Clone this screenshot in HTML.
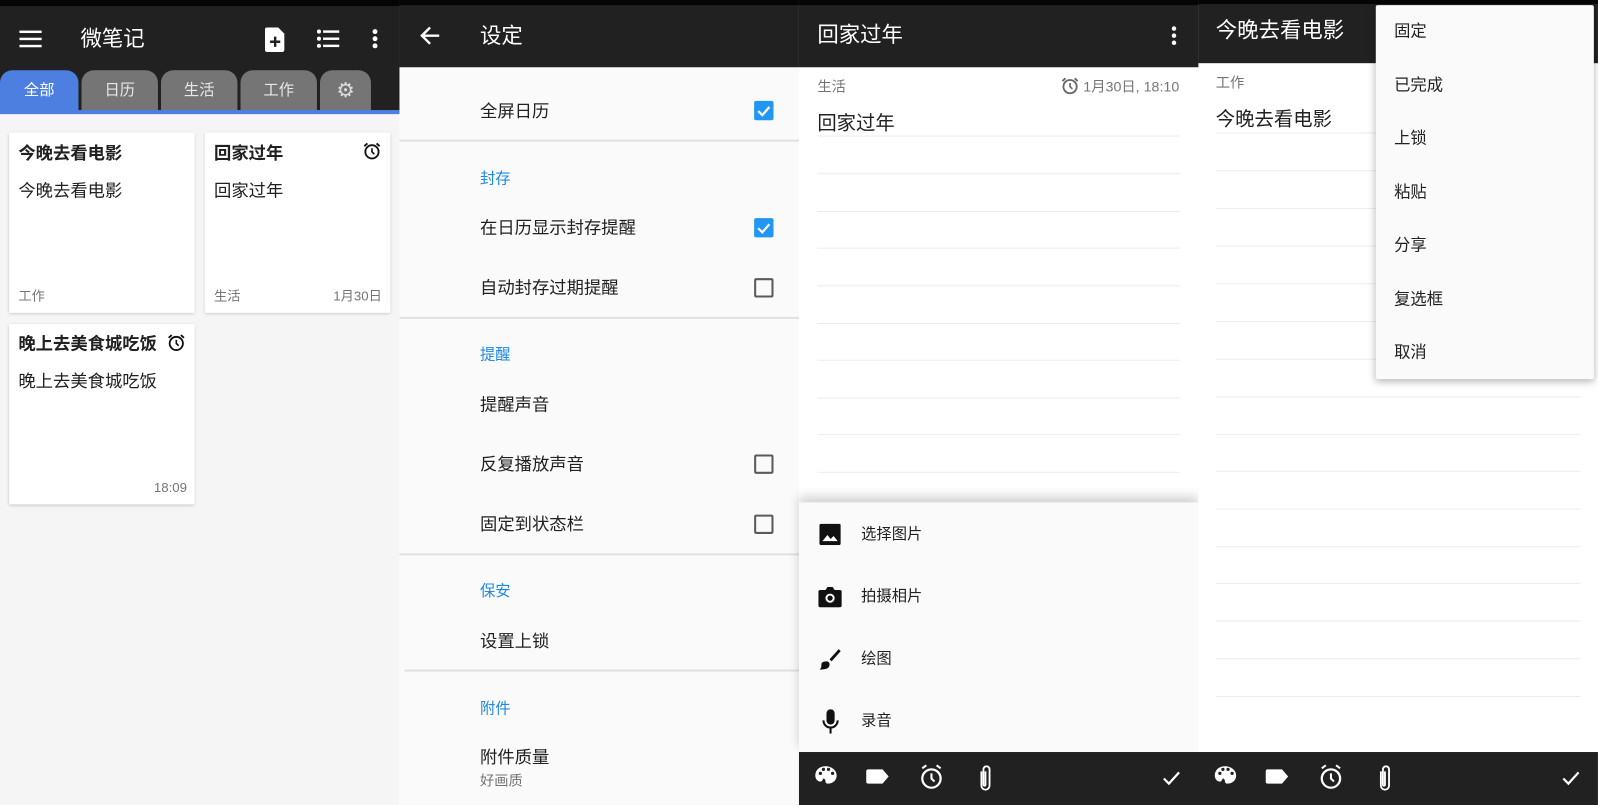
<!DOCTYPE html>
<html><head><meta charset="utf-8"><style>
*{margin:0;padding:0;box-sizing:border-box}
html,body{width:1598px;height:805px;overflow:hidden;background:#fafafa}
body{font-family:"Liberation Sans","Noto Sans CJK SC",sans-serif;color:#212121}
#w{position:absolute;left:0;top:0;width:1568px;height:790px;transform-origin:0 0;transform:scale(1.0191,1.0190)}
.a{position:absolute}
.t{position:absolute;white-space:nowrap;line-height:1}
.tb{background:#212121}
.tab{position:absolute;top:69px;height:40px;border-radius:12px 12px 0 0;background:#757575;color:#e8e8e8;font-size:15px;text-align:center;line-height:40px}
.card{position:absolute;background:#fff;box-shadow:0 1px 3px rgba(0,0,0,.2)}
.line{position:absolute;height:1px;background:#ececec}
.cb{position:absolute;width:19px;height:19px;border-radius:2px}
.cb.on{background:#2196f3}
.cb.off{border:2px solid #5a5a5a}
.blue{color:#1e88e5;font-size:15px}
.div{position:absolute;height:2px;background:#e0e0e0}
.mi{position:absolute;left:18px;font-size:16px;line-height:1}
</style></head><body><div id="w">
<svg width="0" height="0" style="position:absolute"><defs>
<g id="alarm"><circle cx="9" cy="10" r="6.5" fill="none" stroke="currentColor" stroke-width="1.8"/><path d="M9 6.5V10l2.3 2.3" stroke="currentColor" stroke-width="1.6" fill="none"/><path d="M1.5 4.5l3-2.7M16.5 4.5l-3-2.7" stroke="currentColor" stroke-width="1.8"/></g>
</defs></svg>

<!-- Panel 1 -->
<div class="a" style="left:0;top:0;width:392px;height:790px;background:#f5f5f5"></div>
<div class="a tb" style="left:0;top:0;width:392px;height:110px"></div>
<div class="a" style="left:0;top:0;width:392px;height:6px;background:#050505"></div>
<svg class="a" style="left:19px;top:29px" width="22" height="18"><rect y="1" width="22" height="2.4" fill="#fff"/><rect y="8" width="22" height="2.4" fill="#fff"/><rect y="15" width="22" height="2.4" fill="#fff"/></svg>
<div class="t" style="left:79px;top:28px;font-size:21px;color:#fff">微笔记</div>
<svg class="a" style="left:260px;top:27px" width="20" height="24" viewBox="0 0 20 24"><path d="M2 0h11l6 6v16a2 2 0 0 1-2 2H2a2 2 0 0 1-2-2V2a2 2 0 0 1 2-2z" fill="#fff"/><path d="M10 9v10M5 14h10" stroke="#212121" stroke-width="2.4"/></svg>
<svg class="a" style="left:311px;top:29px" width="22" height="18"><g fill="#fff"><circle cx="2" cy="2" r="2"/><circle cx="2" cy="9" r="2"/><circle cx="2" cy="16" r="2"/><rect x="6" y="0.8" width="16" height="2.4"/><rect x="6" y="7.8" width="16" height="2.4"/><rect x="6" y="14.8" width="16" height="2.4"/></g></svg>
<svg class="a" style="left:365px;top:28px" width="6" height="20"><g fill="#fff"><circle cx="3" cy="3" r="2.4"/><circle cx="3" cy="10" r="2.4"/><circle cx="3" cy="17" r="2.4"/></g></svg>
<div class="tab" style="left:0;width:77px;background:#4d7fe0;color:#fff">全部</div>
<div class="tab" style="left:80px;width:75px">日历</div>
<div class="tab" style="left:158px;width:75px">生活</div>
<div class="tab" style="left:236px;width:75px">工作</div>
<div class="tab" style="left:314px;width:50px;font-size:20px;color:#ddd">⚙</div>
<div class="a" style="left:0;top:108px;width:392px;height:4px;background:#4d7fe0"></div>

<div class="card" style="left:9px;top:130px;width:182px;height:177px"></div>
<div class="t" style="left:18px;top:142px;font-size:17px;font-weight:bold">今晚去看电影</div>
<div class="t" style="left:18px;top:179px;font-size:17px">今晚去看电影</div>
<div class="t" style="left:18px;top:284px;font-size:13px;color:#757575">工作</div>
<div class="card" style="left:201px;top:130px;width:182px;height:177px"></div>
<div class="t" style="left:210px;top:142px;font-size:17px;font-weight:bold">回家过年</div>
<svg class="a" style="left:356px;top:139px;color:#111" width="18" height="18"><use href="#alarm"/></svg>
<div class="t" style="left:210px;top:179px;font-size:17px">回家过年</div>
<div class="t" style="left:210px;top:284px;font-size:13px;color:#757575">生活</div>
<div class="t" style="left:327px;top:284px;font-size:13px;color:#757575">1月30日</div>
<div class="card" style="left:9px;top:318px;width:182px;height:177px"></div>
<div class="t" style="left:18px;top:329px;font-size:17px;font-weight:bold">晚上去美食城吃饭</div>
<svg class="a" style="left:164px;top:327px;color:#111" width="18" height="18"><use href="#alarm"/></svg>
<div class="t" style="left:18px;top:366px;font-size:17px">晚上去美食城吃饭</div>
<div class="t" style="left:151px;top:472px;font-size:13px;color:#757575">18:09</div>

<!-- Panel 2 -->
<div class="a" style="left:392px;top:0;width:392px;height:790px;background:#fafafa"></div>
<div class="a tb" style="left:392px;top:0;width:392px;height:66px"></div>
<div class="a" style="left:392px;top:0;width:392px;height:5px;background:#050505"></div>
<svg class="a" style="left:412px;top:25px" width="20" height="20" viewBox="0 0 20 20"><path d="M19 10H3M10 2L2 10l8 8" stroke="#fff" stroke-width="2.4" fill="none"/></svg>
<div class="t" style="left:471px;top:25px;font-size:21px;color:#fff">设定</div>
<div class="t" style="left:471px;top:101px;font-size:17px">全屏日历</div>
<div class="cb on" style="left:740px;top:99px"><svg width="19" height="19"><path d="M4 10l4 4 7-8" stroke="#fff" stroke-width="2.2" fill="none"/></svg></div>
<div class="div" style="left:392px;top:137px;width:392px"></div>
<div class="t blue" style="left:471px;top:168px">封存</div>
<div class="t" style="left:471px;top:215px;font-size:17px">在日历显示封存提醒</div>
<div class="cb on" style="left:740px;top:214px"><svg width="19" height="19"><path d="M4 10l4 4 7-8" stroke="#fff" stroke-width="2.2" fill="none"/></svg></div>
<div class="t" style="left:471px;top:274px;font-size:17px">自动封存过期提醒</div>
<div class="cb off" style="left:740px;top:273px"></div>
<div class="div" style="left:392px;top:311px;width:392px"></div>
<div class="t blue" style="left:471px;top:341px">提醒</div>
<div class="t" style="left:471px;top:389px;font-size:17px">提醒声音</div>
<div class="t" style="left:471px;top:447px;font-size:17px">反复播放声音</div>
<div class="cb off" style="left:740px;top:446px"></div>
<div class="t" style="left:471px;top:506px;font-size:17px">固定到状态栏</div>
<div class="cb off" style="left:740px;top:505px"></div>
<div class="div" style="left:392px;top:543px;width:392px"></div>
<div class="t blue" style="left:471px;top:573px">保安</div>
<div class="t" style="left:471px;top:621px;font-size:17px">设置上锁</div>
<div class="div" style="left:397px;top:657px;width:387px"></div>
<div class="t blue" style="left:471px;top:688px">附件</div>
<div class="t" style="left:471px;top:735px;font-size:17px">附件质量</div>
<div class="t" style="left:471px;top:759px;font-size:14px;color:#757575">好画质</div>

<!-- Panel 3 -->
<div class="a" style="left:784px;top:0;width:392px;height:790px;background:#fff"></div>
<div class="a tb" style="left:784px;top:0;width:392px;height:66px"></div>
<div class="a" style="left:784px;top:0;width:392px;height:5px;background:#050505"></div>
<div class="t" style="left:802px;top:24px;font-size:21px;color:#fff">回家过年</div>
<svg class="a" style="left:1149px;top:25px" width="6" height="20"><g fill="#fff"><circle cx="3" cy="3" r="2.2"/><circle cx="3" cy="10" r="2.2"/><circle cx="3" cy="17" r="2.2"/></g></svg>
<div class="t" style="left:802px;top:78px;font-size:14px;color:#757575">生活</div>
<svg class="a" style="left:1041px;top:75px;color:#666" width="18" height="18"><use href="#alarm"/></svg>
<div class="t" style="left:1063px;top:78px;font-size:14px;color:#757575">1月30日, 18:10</div>
<div class="t" style="left:802px;top:112px;font-size:19px">回家过年</div>
<div class="line" style="left:802px;top:133px;width:356px"></div>
<div class="line" style="left:802px;top:170px;width:356px"></div>
<div class="line" style="left:802px;top:207px;width:356px"></div>
<div class="line" style="left:802px;top:243px;width:356px"></div>
<div class="line" style="left:802px;top:280px;width:356px"></div>
<div class="line" style="left:802px;top:317px;width:356px"></div>
<div class="line" style="left:802px;top:353px;width:356px"></div>
<div class="line" style="left:802px;top:390px;width:356px"></div>
<div class="line" style="left:802px;top:426px;width:356px"></div>
<div class="line" style="left:802px;top:463px;width:356px"></div>
<div class="a" style="left:784px;top:493px;width:392px;height:246px;background:#fafafa;box-shadow:0 -6px 10px rgba(0,0,0,.18)"></div>
<svg class="a" style="left:804px;top:514px" width="21" height="21" viewBox="0 0 21 21"><rect width="21" height="21" rx="2" fill="#111"/><path d="M3 17l5-6 3 4 3-3 4 5z" fill="#fff"/></svg>
<div class="t" style="left:845px;top:517px;font-size:15px">选择图片</div>
<svg class="a" style="left:803px;top:575px" width="23" height="21" viewBox="0 0 23 21"><path d="M2 4h5l2-3h5l2 3h5a2 2 0 0 1 2 2v13a2 2 0 0 1-2 2H2a2 2 0 0 1-2-2V6a2 2 0 0 1 2-2z" fill="#111"/><circle cx="11.5" cy="12" r="4.5" fill="#fff"/><circle cx="11.5" cy="12" r="2.6" fill="#111"/></svg>
<div class="t" style="left:845px;top:578px;font-size:15px">拍摄相片</div>
<svg class="a" style="left:804px;top:636px" width="21" height="22" viewBox="0 0 21 22"><path d="M19 1l2 2-9 10-2-2z" fill="#111"/><path d="M7 13c3 0 4 3 2 6-2 2-6 2-9 2 2-1 2-3 2-5s2-3 5-3z" fill="#111"/></svg>
<div class="t" style="left:845px;top:639px;font-size:15px">绘图</div>
<svg class="a" style="left:806px;top:696px" width="18" height="24" viewBox="0 0 18 24"><rect x="5" y="0" width="8" height="15" rx="4" fill="#111"/><path d="M2 11a7 7 0 0 0 14 0M9 18v6" stroke="#111" stroke-width="2" fill="none"/></svg>
<div class="t" style="left:845px;top:700px;font-size:15px">录音</div>

<!-- Panel 4 -->
<div class="a" style="left:1176px;top:0;width:392px;height:790px;background:#fff"></div>
<div class="a tb" style="left:1176px;top:0;width:392px;height:62px"></div>
<div class="a" style="left:1176px;top:0;width:392px;height:4px;background:#050505"></div>
<div class="t" style="left:1193px;top:20px;font-size:21px;color:#fff">今晚去看电影</div>
<div class="t" style="left:1193px;top:74px;font-size:14px;color:#757575">工作</div>
<div class="t" style="left:1193px;top:108px;font-size:19px">今晚去看电影</div>
<div class="line" style="left:1193px;top:130px;width:358px"></div>
<div class="line" style="left:1193px;top:167px;width:358px"></div>
<div class="line" style="left:1193px;top:204px;width:358px"></div>
<div class="line" style="left:1193px;top:241px;width:358px"></div>
<div class="line" style="left:1193px;top:278px;width:358px"></div>
<div class="line" style="left:1193px;top:315px;width:358px"></div>
<div class="line" style="left:1193px;top:352px;width:358px"></div>
<div class="line" style="left:1193px;top:389px;width:358px"></div>
<div class="line" style="left:1193px;top:426px;width:358px"></div>
<div class="line" style="left:1193px;top:462px;width:358px"></div>
<div class="line" style="left:1193px;top:499px;width:358px"></div>
<div class="line" style="left:1193px;top:536px;width:358px"></div>
<div class="line" style="left:1193px;top:572px;width:358px"></div>
<div class="line" style="left:1193px;top:609px;width:358px"></div>
<div class="line" style="left:1193px;top:646px;width:358px"></div>
<div class="line" style="left:1193px;top:683px;width:358px"></div>
<div class="a" style="left:1350px;top:5px;width:214px;height:367px;background:#fafafa;border-radius:2px;box-shadow:0 2px 8px rgba(0,0,0,.3)">
<div class="mi" style="top:19px">固定</div>
<div class="mi" style="top:72px">已完成</div>
<div class="mi" style="top:124px">上锁</div>
<div class="mi" style="top:177px">粘贴</div>
<div class="mi" style="top:229px">分享</div>
<div class="mi" style="top:282px">复选框</div>
<div class="mi" style="top:334px">取消</div>
</div>

<!-- bottom toolbars -->
<div class="a tb" style="left:784px;top:738px;width:784px;height:52px"></div>
<svg class="a" style="left:0;top:738px" width="1568" height="52">
<defs>
<g id="bar" fill="#fff">
<path d="M10 5C4 5 0 9 0 14c0 4 3 6 5 6 2 0 2-2 3-3 1 0 2 1 2 3 0 1 1 2 2 2 6 0 9-4 9-8 0-5-5-9-11-9z"/>
<circle cx="5" cy="12" r="1.6" fill="#212121"/><circle cx="8" cy="8" r="1.6" fill="#212121"/><circle cx="13" cy="8" r="1.6" fill="#212121"/><circle cx="17" cy="12" r="1.6" fill="#212121"/>
<path d="M52 8h14l6 7-6 7H52a2 2 0 0 1-2-2V10a2 2 0 0 1 2-2z"/>
<circle cx="114" cy="17" r="9" fill="none" stroke="#fff" stroke-width="2.2"/><path d="M114 12v5l3 3" stroke="#fff" stroke-width="2" fill="none"/><path d="M105 7l4-3M123 7l-4-3" stroke="#fff" stroke-width="2"/>
<path d="M163 10v14a4 4 0 0 0 8 0V8a3 3 0 0 0-6 0v15a1 1 0 0 0 2 0V10" stroke="#fff" stroke-width="1.8" fill="none"/>
<path d="M342 17l5 5 10-11" stroke="#fff" stroke-width="2.2" fill="none"/>
</g></defs>
<use href="#bar" x="800" y="9"/>
<use href="#bar" x="1192" y="9"/>
</svg>
</div></body></html>
